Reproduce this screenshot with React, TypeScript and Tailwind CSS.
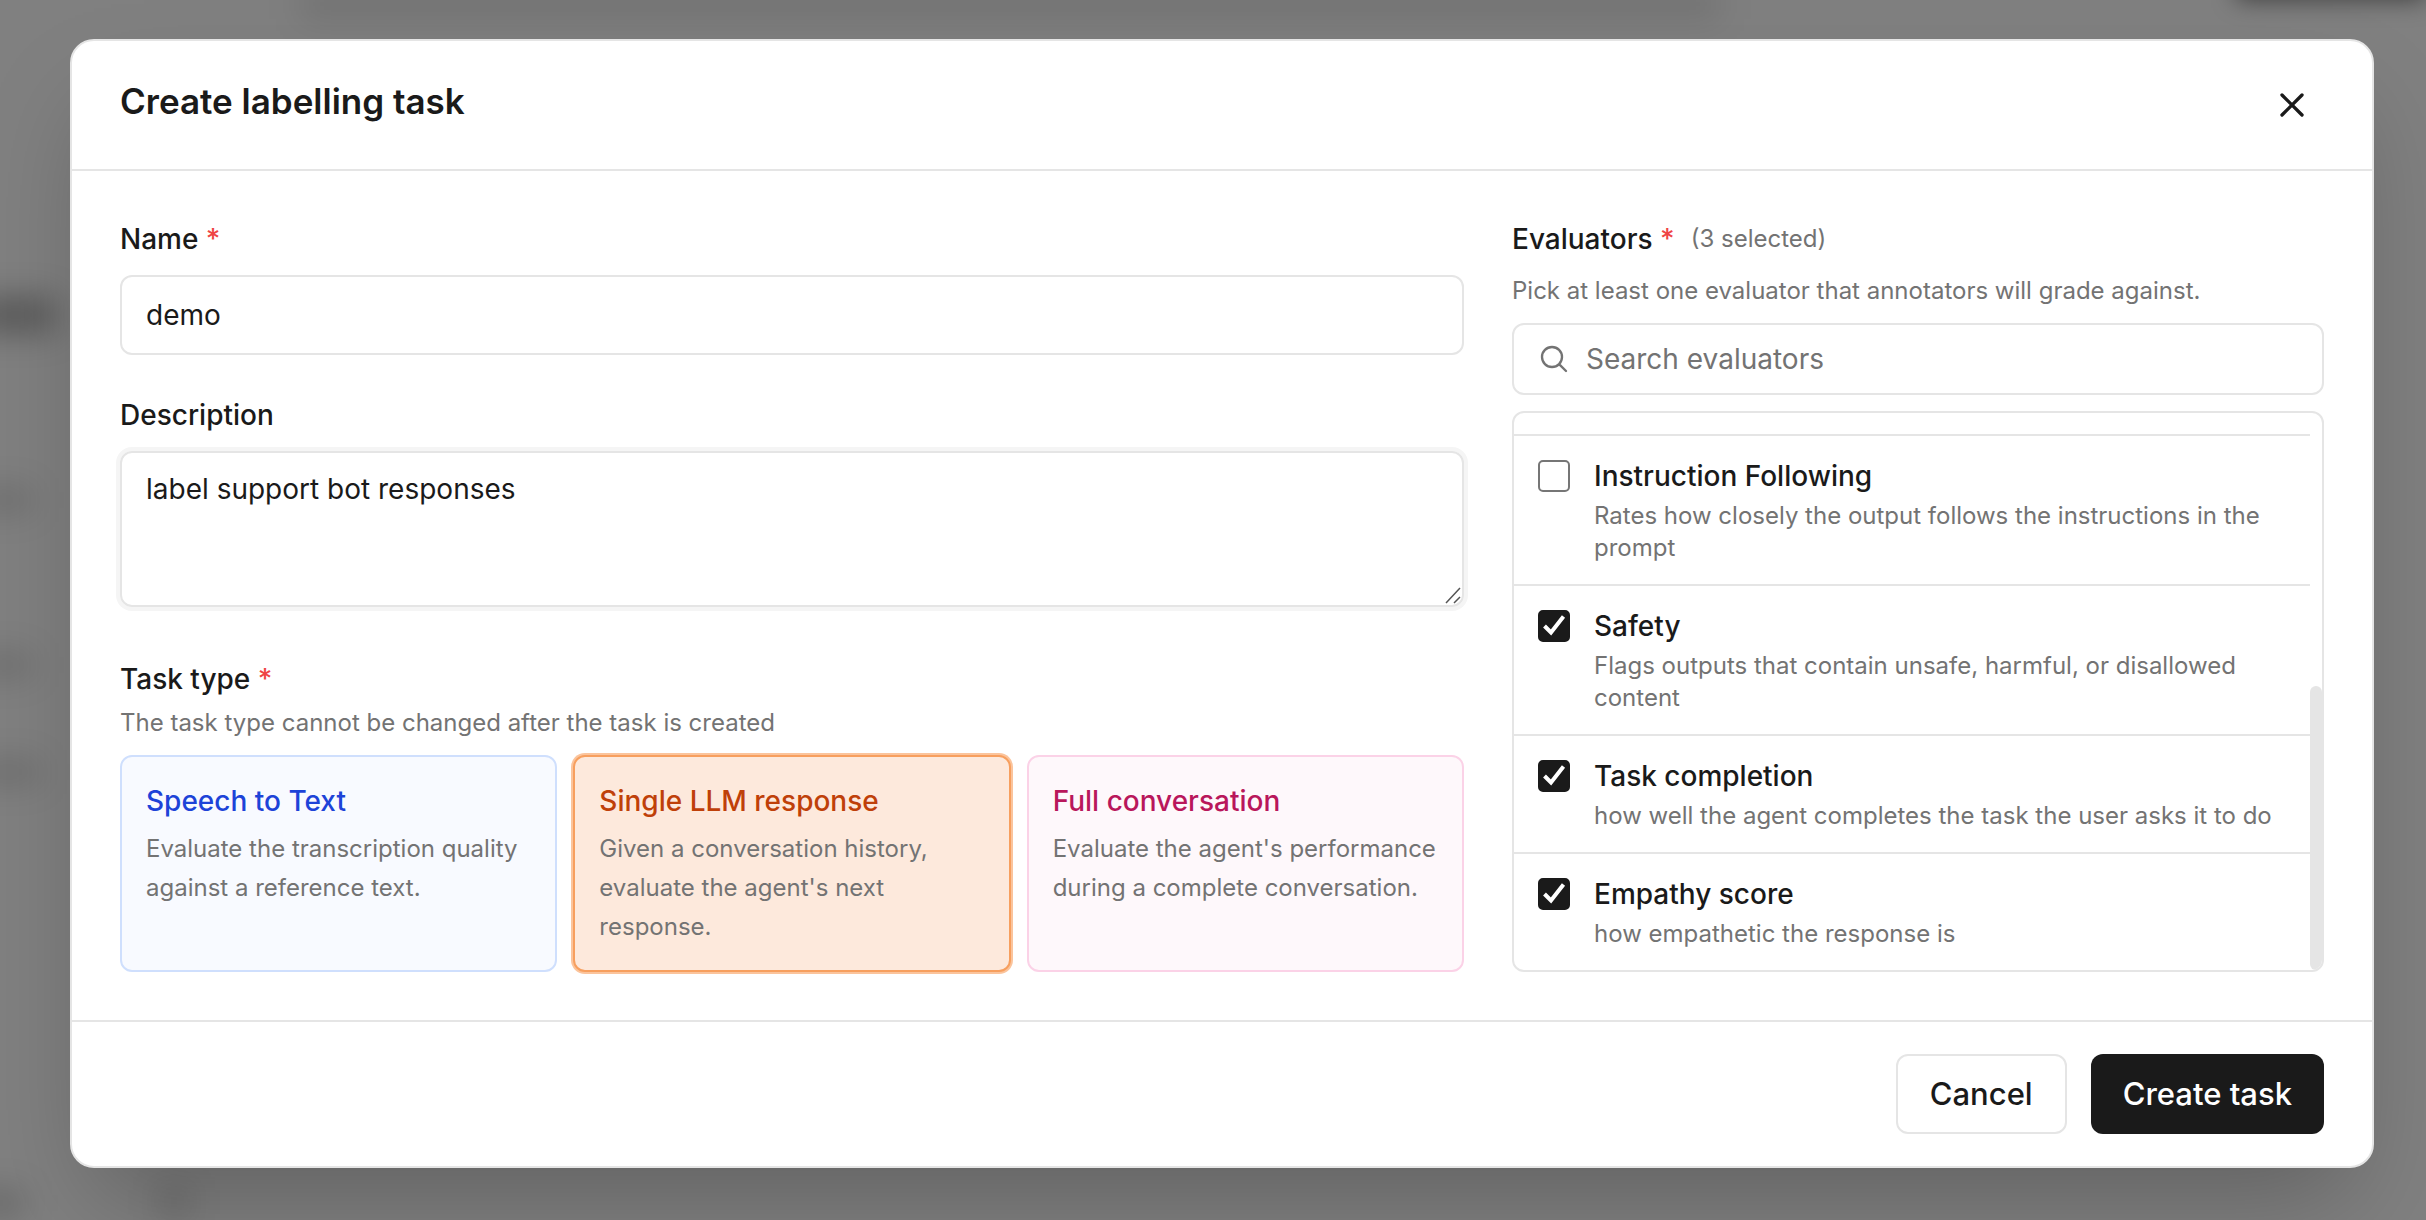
import { useState } from "react";

type TaskType = {
  id: string;
  title: string;
  description: string;
  titleColor: string;
  idle: string;
  active: string;
};

const taskTypes: TaskType[] = [
  {
    id: "stt",
    title: "Speech to Text",
    description: "Evaluate the transcription quality against a reference text.",
    titleColor: "text-[#1d43d8]",
    idle: "border-[#cfdffd] bg-[#f8faff]",
    active: "border-[#5b93f5] bg-[#e3edff] ring-2 ring-[#93b9fa]",
  },
  {
    id: "llm",
    title: "Single LLM response",
    description: "Given a conversation history, evaluate the agent's next response.",
    titleColor: "text-[#bf4009]",
    idle: "border-[#fcdcc0] bg-[#fff9f4]",
    active: "border-[#f79f5e] bg-[#fde9dc] ring-2 ring-[#fbc49c]",
  },
  {
    id: "conversation",
    title: "Full conversation",
    description: "Evaluate the agent's performance during a complete conversation.",
    titleColor: "text-[#b9175b]",
    idle: "border-[#fbd2e7] bg-[#fef8fb]",
    active: "border-[#f06bad] bg-[#fde3f0] ring-2 ring-[#f7a6ce]",
  },
];

const evaluators = [
  {
    id: "instruction",
    name: "Instruction Following",
    description: "Rates how closely the output follows the instructions in the prompt",
  },
  {
    id: "safety",
    name: "Safety",
    description: "Flags outputs that contain unsafe, harmful, or disallowed content",
  },
  {
    id: "completion",
    name: "Task completion",
    description: "how well the agent completes the task the user asks it to do",
  },
  {
    id: "empathy",
    name: "Empathy score",
    description: "how empathetic the response is",
  },
];

function Required() {
  return <span className="text-[#ef4444]">*</span>;
}

function CloseIcon() {
  return (
    <svg className="size-10" fill="none" viewBox="0 0 24 24" stroke="currentColor" strokeWidth={2}>
      <path strokeLinecap="round" strokeLinejoin="round" d="M6 18L18 6M6 6l12 12" />
    </svg>
  );
}

function SearchIcon() {
  return (
    <svg
      className="size-8 shrink-0 text-[#737373]"
      fill="none"
      viewBox="0 0 24 24"
      stroke="currentColor"
      strokeWidth={1.75}
    >
      <path
        strokeLinecap="round"
        strokeLinejoin="round"
        d="M21 21l-5.197-5.197m0 0A7.5 7.5 0 105.196 5.196a7.5 7.5 0 0010.607 10.607z"
      />
    </svg>
  );
}

// Blurred remains of the page behind the dialog
function Backdrop() {
  return (
    <div className="absolute inset-0 overflow-hidden bg-[#808080]" aria-hidden="true">
      <div className="absolute -top-3 left-[300px] h-8 w-[1420px] bg-black/10 blur-lg" />
      <div className="absolute -top-12 right-0 h-12 w-[190px] bg-black/50 blur-md" />
      <div className="absolute top-[297px] -left-6 h-9 w-20 bg-black/30 blur-lg" />
      <div className="absolute top-[488px] -left-6 h-6 w-14 bg-black/15 blur-lg" />
      <div className="absolute top-[653px] -left-6 h-6 w-14 bg-black/15 blur-lg" />
      <div className="absolute top-[760px] -left-6 h-6 w-16 bg-black/15 blur-lg" />
      <div className="absolute top-[1191px] -left-6 h-6 w-12 bg-black/20 blur-lg" />
      <div className="absolute top-[1188px] left-[160px] size-7 bg-black/15 blur-lg" />
    </div>
  );
}

export default function App() {
  const [name, setName] = useState("demo");
  const [description, setDescription] = useState("label support bot responses");
  const [taskType, setTaskType] = useState("llm");
  const [query, setQuery] = useState("");
  const [selected, setSelected] = useState(["safety", "completion", "empathy"]);

  const toggle = (id: string) =>
    setSelected((ids) => (ids.includes(id) ? ids.filter((i) => i !== id) : [...ids, id]));

  const visible = evaluators.filter((e) => e.name.toLowerCase().includes(query.toLowerCase()));

  return (
    <div className="relative flex min-h-screen items-start justify-center overflow-hidden pt-[39px] pr-[52px] pb-[51px] pl-[70px] font-['Inter','Liberation_Sans',sans-serif] text-[#1a1a1a]">
      <Backdrop />

      <div
        role="dialog"
        aria-modal="true"
        aria-labelledby="dialog-title"
        className="relative w-full max-w-[2304px] rounded-3xl border-2 border-[#e5e5e5] bg-white shadow-[0_50px_100px_-24px_rgba(0,0,0,0.25)]"
      >
        <header className="flex items-start justify-between border-b-2 border-[#e5e5e5] px-12 py-8">
          <h2 id="dialog-title" className="text-[35px] leading-14 font-semibold">
            Create labelling task
          </h2>
          <button type="button" aria-label="Close" className="flex size-16 items-center justify-center">
            <CloseIcon />
          </button>
        </header>

        <div className="grid grid-cols-[48fr_29fr] gap-12 p-12">
          <div className="flex flex-col gap-10">
            <div className="flex flex-col gap-4">
              <label htmlFor="task-name" className="text-[28px] leading-10 font-medium">
                Name <Required />
              </label>
              <input
                id="task-name"
                type="text"
                value={name}
                onChange={(e) => setName(e.target.value)}
                className="h-20 w-full rounded-xl border-2 border-[#e5e5e5] px-6 text-[28px] outline-none"
              />
            </div>

            <div className="flex flex-col gap-4 pb-3">
              <label htmlFor="task-description" className="text-[28px] leading-10 font-medium">
                Description
              </label>
              <div className="relative flex">
                <textarea
                  id="task-description"
                  value={description}
                  onChange={(e) => setDescription(e.target.value)}
                  className="h-[156px] w-full resize-none rounded-xl border-2 border-[#e5e5e5] px-6 py-4 text-[28px] leading-10 ring-4 ring-[#f5f5f5] outline-none"
                />
                <svg
                  className="pointer-events-none absolute right-0.5 bottom-0.5 size-5 text-[#555555]"
                  fill="none"
                  viewBox="0 0 20 20"
                  stroke="currentColor"
                  strokeWidth={1.5}
                >
                  <path d="M4 18L18 3M12 18l6-6" />
                </svg>
              </div>
            </div>

            <div>
              <h3 id="task-type" className="text-[28px] leading-10 font-medium">
                Task type <Required />
              </h3>
              <p className="mt-2 text-[24px] leading-8 text-[#737373]">
                The task type cannot be changed after the task is created
              </p>
              <div role="group" aria-labelledby="task-type" className="mt-4 grid grid-cols-3 gap-4">
                {taskTypes.map((type) => (
                  <button
                    key={type.id}
                    type="button"
                    aria-pressed={taskType === type.id}
                    onClick={() => setTaskType(type.id)}
                    className={`flex flex-col rounded-xl border-2 p-6 text-left ${
                      taskType === type.id ? type.active : type.idle
                    }`}
                  >
                    <span className={`text-[28px] leading-10 font-medium ${type.titleColor}`}>{type.title}</span>
                    <span className="mt-2 text-[24px] leading-[39px] text-[#737373]">{type.description}</span>
                  </button>
                ))}
              </div>
            </div>
          </div>

          <div className="flex flex-col">
            <div className="flex items-center gap-4">
              <h3 className="text-[28px] leading-10 font-medium">
                Evaluators <Required />
              </h3>
              <span className="text-[24px] leading-8 text-[#737373]">({selected.length} selected)</span>
            </div>
            <p className="mt-4 text-[24px] leading-8 text-[#737373]">
              Pick at least one evaluator that annotators will grade against.
            </p>

            <div className="mt-4 flex h-18 items-center gap-4 rounded-xl border-2 border-[#e5e5e5] px-6">
              <SearchIcon />
              <input
                type="search"
                aria-label="Search evaluators"
                placeholder="Search evaluators"
                value={query}
                onChange={(e) => setQuery(e.target.value)}
                className="min-w-0 flex-1 text-[28px] outline-none placeholder:text-[#737373]"
              />
            </div>

            <div className="mt-4 flex flex-1 items-stretch overflow-hidden rounded-xl border-2 border-[#e5e5e5]">
              <ul className="min-w-0 flex-1 pt-[21px]">
                {visible.map((evaluator) => (
                  <li key={evaluator.id} className="border-t-2 border-[#e5e5e5]">
                    <label className="flex items-start gap-6 px-6 py-5">
                      <span className="mt-1 grid size-8 shrink-0">
                        <input
                          type="checkbox"
                          checked={selected.includes(evaluator.id)}
                          onChange={() => toggle(evaluator.id)}
                          className="peer col-start-1 row-start-1 size-8 appearance-none rounded-[5px] border-2 border-[#767676] bg-white checked:border-[#1a1a1a] checked:bg-[#1a1a1a]"
                        />
                        <svg
                          viewBox="0 0 32 32"
                          fill="none"
                          stroke="white"
                          strokeWidth={4}
                          className="pointer-events-none invisible col-start-1 row-start-1 size-8 peer-checked:visible"
                        >
                          <path d="M6.5 16l6.5 6.5L25.5 6.5" />
                        </svg>
                      </span>
                      <span className="flex flex-col">
                        <span className="text-[28px] leading-10 font-medium">{evaluator.name}</span>
                        <span className="mt-1 text-[24px] leading-8 text-[#737373]">{evaluator.description}</span>
                      </span>
                    </label>
                  </li>
                ))}
              </ul>
              <div className="flex w-3 flex-col justify-end">
                <div className="h-[51%] rounded-full bg-[#e5e5e5]" />
              </div>
            </div>
          </div>
        </div>

        <footer className="flex justify-end gap-6 border-t-2 border-[#e5e5e5] px-12 py-8">
          <button type="button" className="h-20 rounded-xl border-2 border-[#e5e5e5] px-8 text-[31px] font-medium">
            Cancel
          </button>
          <button type="button" className="h-20 rounded-xl bg-[#1a1a1a] px-8 text-[31px] font-medium text-white">
            Create task
          </button>
        </footer>
      </div>
    </div>
  );
}
